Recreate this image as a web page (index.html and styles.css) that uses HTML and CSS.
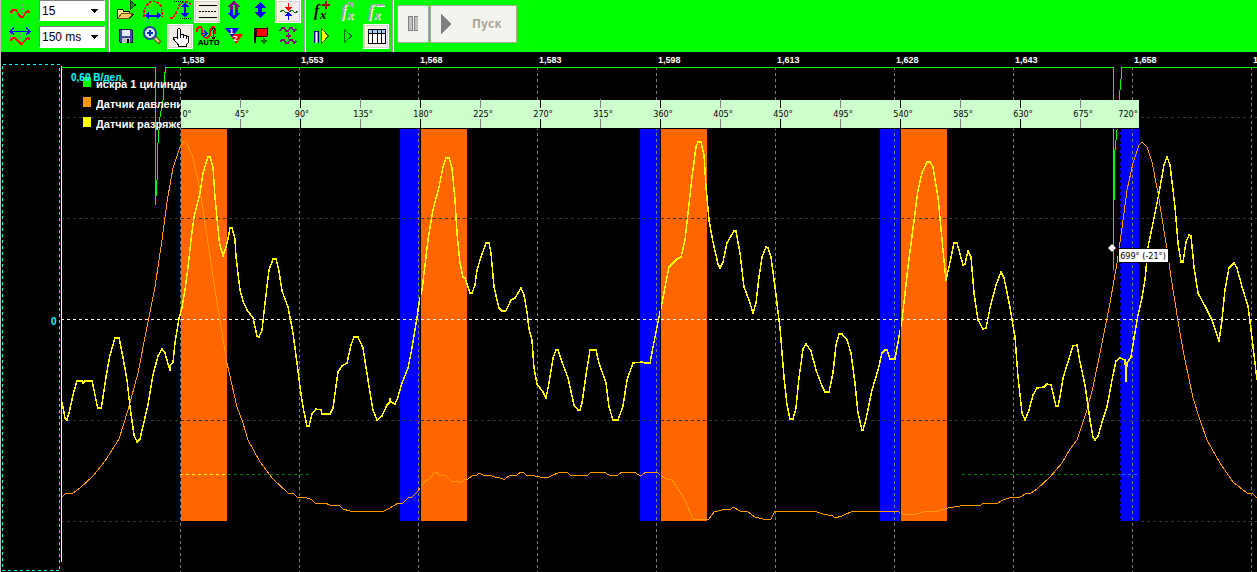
FILE: index.html
```html
<!DOCTYPE html>
<html lang="ru">
<head>
<meta charset="utf-8">
<title>Осциллограф</title>
<link rel="stylesheet" href="styles.css">
</head>
<body>
<header class="toolbar">
  <div class="scales">
    <label class="scale-icon" for="gain" aria-label="Усиление">
      <svg width="24" height="20" class="crisp"><path d="M4.500 3v15M9.500 3v15M14.500 3v15M19.500 3v15" stroke="#808080" stroke-dasharray="2 2"/><path d="M2 12L5 9H8L11 14 13 16H15L18 11 20 10 22 12" class="red thick"/></svg>
    </label>
    <div class="combo">
      <select id="gain"><option>15</option></select>
      <svg class="arrow crisp" width="8" height="5"><path d="M0 0h8L4 4z"/></svg>
    </div>
    <label class="scale-icon" for="sweep" aria-label="Развертка">
      <svg width="24" height="20" class="crisp"><path d="M2.500 6v8M12.500 6v12M21.500 6v8" stroke="#808080" stroke-dasharray="2 2"/><path d="M3 4.500h18M6 1L2 4.500l4 3M18 1l4 3.500-4 3" class="blue thick"/><path d="M2 14L5 11H7L11 15 13 17H14L18 12 20 11 22 13" class="red thick"/></svg>
    </label>
    <div class="combo">
      <select id="sweep"><option>150 ms</option></select>
      <svg class="arrow crisp" width="8" height="5"><path d="M0 0h8L4 4z"/></svg>
    </div>
  </div>
  <div class="divider"></div>
  <div class="tools tools-main">
    <button class="tool" aria-label="Открыть"><svg width="26" height="23" class="crisp"><path d="M4.500 18V9h5l1 2h6v3h4l-4 4.500H4.500z" fill="#ffe98a" stroke="#000"/><path d="M5 18l4-5h11l-4 5.500z" fill="#ffc864" stroke="#6b4a00"/><path d="M17.500 10V1l5 4-5 4" fill="#00a000" stroke="#003000"/></svg></button>
    <button class="tool" aria-label="Цикл"><svg width="26" height="23" class="crisp"><path d="M4 17V11l2-5 4-4 3-1 4 1 4 4 1 5v6" class="red thick" stroke-dasharray="3 1"/><path d="M6 15.500h14" stroke="#00f"/><path d="M5 15.500l4-4v8zM21 15.500l-4-4v8z" fill="#00f"/><path d="M8 14.500h10v2H8z" fill="#00f"/></svg></button>
    <button class="tool" aria-label="Амплитуда"><svg width="26" height="23" class="crisp"><path d="M3 18h3l3-5 4-9 3-2h5l3 2" class="red thick" stroke-dasharray="3 1"/><path d="M7 1.500h10M13 18.500h11" stroke="#000" stroke-dasharray="1 1"/><path d="M17 5h2v11h-2z" fill="#00f"/><path d="M18 2l-4 5h8zM18 18l-4-5h8z" fill="#00f"/></svg></button>
    <button class="tool pressed" aria-label="Сетка"><svg width="26" height="23" class="crisp"><path d="M5 5.500h18M5 17.500h18" stroke="#000"/><path d="M5 11.500h18" stroke="#000" stroke-dasharray="2 1"/></svg></button>
    <button class="tool" aria-label="Растянуть"><svg width="26" height="23" class="crisp"><path d="M13 1l7 6h-3v4H9V7H6z" fill="#800080"/><path d="M13 19l7-6h-3v-3H9v3H6z" fill="#00f"/><path d="M12 5h2v10h-2z" fill="#0f0"/></svg></button>
    <button class="tool" aria-label="Сжать"><svg width="26" height="23" class="crisp"><path d="M12 2l6 6h-4v4h4l-6 6-6-6h4V8H6z" fill="#00f"/></svg></button>
    <button class="tool pressed" aria-label="Уровень"><svg width="26" height="23" class="crisp"><path d="M5 12l3-2 3 3 3-1 3-2 3 3 3-2" fill="none" stroke="#006000"/><path d="M13 3h1v4h3l-3 4h-1l-3-4h3z" fill="#f00"/><path d="M13 20h1v-4h3l-3-4h-1l-3 4h3z" fill="#00f"/></svg></button>
    <button class="tool" aria-label="Сохранить"><svg width="26" height="25" class="crisp"><path d="M6.500 5.500h12l1 1v12h-12l-1-1z" fill="#3c4c9c" stroke="#101840"/><path d="M9 6h8v6H9z" fill="#e8e8ff"/><path d="M9 14h8v5H9z" fill="#c0c0c0"/><path d="M14 15h2v4h-2z"/></svg></button>
    <button class="tool" aria-label="Лупа"><svg width="26" height="25"><path d="M14 13l6 6" stroke="#705000" stroke-width="4"/><path d="M15 14l4 4" stroke="#ffd8a0" stroke-width="2"/><circle cx="10" cy="9" r="6" fill="#d8eeff" stroke="#204090" stroke-width="2"/><path d="M7 9h6M10 6v6" stroke="#0030b0" stroke-width="2"/></svg></button>
    <button class="tool pressed" aria-label="Рука"><svg width="26" height="25" class="crisp"><path d="M10.500 14V5.500l1-1h1l1 1V10h2l1 1h2l1 1h1l1 1v5l-2 3v1h-8v-1l-5-6v-2h2z" fill="#fff" stroke="#000"/><path d="M13.500 10v4M16.500 11v3M19.500 12v3" stroke="#000"/></svg></button>
    <button class="tool" aria-label="Авто"><svg width="26" height="25" class="crisp"><path class="red thick" d="M3 8V5l2-2h2l1 2v5l2 3 3 1 3-3V6l2-3h2l1 2v5"/><path d="M7 9.500h5M10 7l3 2.500-3 2.500" class="blue thick"/><path d="M19.500 6v8M17 7l2.500-3L22 7M17 12l2.500 3 2.500-3" fill="none" stroke="#000"/><text class="auto-text" x="4" y="21">AUTO</text></svg></button>
    <button class="tool" aria-label="Каналы"><svg width="26" height="25"><path d="M9 10h13l-7 10z" fill="#f00"/><path d="M4 4h14l-7 9z" fill="#00f"/><text class="mini-text" x="8" y="10">1</text><text class="mini-text" x="12" y="17">2</text></svg></button>
    <button class="tool" aria-label="Метка"><svg width="26" height="25" class="crisp"><path d="M7 4v15" stroke="#000" stroke-width="2"/><path d="M8 5l4-1 4 1 3-1v8l-3 1-4-1-4 1z" fill="#f00" stroke="#400000"/><path d="M16 14v6M13 17h6" stroke="#007000" stroke-width="2"/></svg></button>
    <button class="tool" aria-label="Сложить"><svg width="26" height="25" class="crisp"><path d="M5 7l2-3h2l2 3h2l2-3h2l2 3 2-2M5 18l2-2h2l2 3h2l2-3h2l2 3 2-2M13.500 9v6M11 12h5" class="thick" fill="none" stroke="#800080"/></svg></button>
  </div>
  <div class="divider"></div>
  <div class="tools tools-extra">
    <button class="tool" aria-label="Добавить функцию"><svg width="26" height="23"><text class="fx" x="5" y="16">f</text><text class="fx fx-small" x="11" y="19">x</text><path d="M17 1v8M13 5h8" stroke="#900000" stroke-width="2" class="crisp"/></svg></button>
    <button class="tool" aria-label="Изменить функцию"><svg width="26" height="23"><g class="off-light"><text class="fx" x="6" y="17">f</text><text class="fx fx-small" x="12" y="20">x</text></g><g class="off"><text class="fx" x="5" y="16">f</text><text class="fx fx-small" x="11" y="19">x</text><path d="M11 2h7v7z"/></g></svg></button>
    <button class="tool" aria-label="Удалить функцию"><svg width="26" height="23"><g class="off-light"><text class="fx" x="6" y="17">f</text><text class="fx fx-small" x="12" y="20">x</text><path d="M14 5h8v2h-8z"/></g><g class="off"><text class="fx" x="5" y="16">f</text><text class="fx fx-small" x="11" y="19">x</text><path d="M13 4h8v2h-8z"/></g></svg></button>
    <button class="tool" aria-label="Шаг"><svg width="26" height="25" class="crisp"><path d="M5.500 19V7h4v12" fill="none" stroke="#000080"/><path d="M7.500 8v11" stroke="#fff"/><path d="M12.500 4.500v15l7-7.500z" fill="#ff0" stroke="#406000"/></svg></button>
    <button class="tool" aria-label="Воспроизвести"><svg width="26" height="25" class="crisp"><path d="M8.500 5.500v13l7-6.500z" fill="none" stroke="#007000"/></svg></button>
    <button class="tool pressed" aria-label="Таблица"><svg width="26" height="25" class="crisp"><path d="M5.500 5.500h17v14h-17z" fill="#fff" stroke="#000"/><path d="M6 6h16v3H6z" fill="#a0d0ff"/><path d="M5 9.500h18M9.500 6v14M14.500 6v14M18.500 6v14" stroke="#000"/></svg></button>
  </div>
  <div class="divider"></div>
  <div class="run">
    <button class="run-button pause" aria-label="Пауза" disabled><svg width="12" height="16" class="crisp"><path d="M.5.5h4v14h-4zM6.500.5h4v14h-4z" fill="#c0c0c0" stroke="#808080"/></svg></button>
    <button class="run-button start" disabled><svg width="11" height="20" class="crisp"><path d="M0 0l11 10L0 20z" fill="#808080"/></svg><span>Пуск</span></button>
  </div>
</header>

<main class="scope">
  <svg class="plot" width="100%" height="520" role="img" aria-label="Осциллограмма">
    <g transform="translate(0 -52)">
      <g class="crisp">
        <path class="edge" d="M.5 52v520"/>
        <path class="panel" d="M2.500 64.500h57V570.500h-57z"/>
        <g class="phase-out">
          <path d="M400 129h20v392h-20zM640 129h20v392h-20zM880 129h20v392h-20zM1120 129h19v392h-19z"/>
        </g>
        <g class="phase-in">
          <path d="M181 129h46v392h-46zM421 129h46v392h-46zM661 129h46v392h-46zM901 129h46v392h-46z"/>
        </g>
        <path class="window" d="M1120.500 129v392"/>
        <path class="grid-x" d="M180.500 67v505M299.500 67v505M418.500 67v505M537.500 67v505M656.500 67v505M775.500 67v505M894.500 67v505M1013.500 67v505M1132.500 67v505M1251.500 67v505"/>
        <line class="grid-y" x1="61" x2="100%" y1="117.500" y2="117.500"/>
        <line class="grid-y" x1="61" x2="100%" y1="218.500" y2="218.500"/>
        <line class="grid-y" x1="61" x2="100%" y1="420.500" y2="420.500"/>
        <line class="grid-y" x1="61" x2="180" y1="521.500" y2="521.500"/>
        <line class="grid-y" x1="1141" x2="100%" y1="521.500" y2="521.500"/>
        <line class="zero" x1="61" x2="100%" y1="319.500" y2="319.500"/>
        <path class="level" d="M228 474.500h81M962 474.500h158"/>
        <path class="level level-in" d="M180 474.500h46"/>
        <path class="level level-out" d="M1122 474.500h17"/>

        <polyline class="trace pressure" points="62,497 66,493 73,493 80,488 93,476 105,461 119,439 128,410 138,373 148,322 155,287 162,240 167,202 173,168 180,147 184,141 187,144 192,155 197,175 202,203 208,243 215,290 227,363 237,407 243,423 248,440 260,462 273,479 288,493 293,493 297,497 305,497 312,500 315,503 325,503 330,505 339,505 343,509 350,511 384,511 390,508 398,503 403,503 408,498 412,497 418,491 423,483 429,479 435,472 437,472 439,475 446,476 451,481 458,481 461,483 464,480 468,479 472,476 477,475 479,473 483,475 492,476 495,477 500,478 503,479 505,479 509,476 517,475 521,472 523,472 526,475 535,476 540,477 549,477 560,472 567,472 570,475 580,476 588,475 591,472 604,472 609,475 618,475 622,472 634,472 639,475 642,475 646,472 657,472 660,475 667,479 672,480 682,495 688,507 693,519 709,519 714,512 722,510 731,509 733,507 740,511 748,512 755,517 763,519 771,519 775,511 814,511 823,514 833,516 835,518 842,516 853,511 897,511 903,514 913,515 923,512 938,511 948,508 960,506 963,505 981,505 983,503 998,503 1003,500 1012,497 1020,497 1027,493 1031,493 1037,489 1050,477 1062,463 1070,449 1077,440 1087,410 1093,387 1100,353 1110,303 1117,263 1122,228 1127,190 1133,163 1139,145 1142,142 1147,147 1152,162 1158,193 1166,243 1173,290 1181,339 1185,360 1193,398 1200,420 1207,440 1220,463 1233,482 1247,493 1252,493 1257,498"/>
        <polyline class="trace vacuum" points="62,402 65,418 67,420 69,413 73,395 77,381 82,381 83,383 85,381 92,381 94,390 97,405 98,408 101,408 102,404 106,377 110,355 115,338 119,338 122,352 127,380 130,407 134,435 137,442 140,439 143,426 148,405 153,375 158,356 162,349 165,353 168,364 170,370 170,366 173,362 175,343 179,318 182,308 185,290 188,267 191,240 194,217 200,193 203,173 208,157 210,157 213,167 215,197 219,239 220,245 223,256 226,247 228,239 230,228 232,228 235,239 236,257 240,290 243,301 247,310 253,318 257,336 259,337 262,330 265,303 269,270 273,259 276,259 279,271 282,291 288,307 293,333 297,363 300,387 303,407 307,426 309,426 312,414 316,409 321,410 322,414 330,414 333,408 338,372 342,366 347,363 351,345 354,337 358,337 363,348 368,380 373,410 377,420 382,416 387,405 389,403 390,399 391,402 395,404 398,397 402,383 408,368 412,348 417,318 419,303 422,290 428,240 433,210 439,187 443,167 446,158 449,158 452,168 455,200 457,233 460,263 463,277 465,278 468,287 470,293 472,293 475,285 477,270 481,257 486,243 489,243 491,253 494,287 499,308 502,311 506,311 511,300 515,298 521,288 524,295 527,312 529,329 532,340 534,368 537,384 543,392 546,398 549,383 553,358 556,350 558,350 562,362 568,378 574,405 578,410 580,410 582,403 586,375 590,350 596,350 599,363 606,383 609,407 613,420 618,420 623,406 627,380 633,363 642,362 645,363 650,363 653,347 658,322 662,303 665,287 669,267 677,259 681,257 685,240 688,213 692,177 696,147 698,142 701,142 704,155 706,187 709,220 713,242 718,264 720,268 723,262 727,243 734,231 736,231 740,253 744,287 749,300 753,313 756,303 759,277 762,257 766,247 768,248 771,257 775,287 780,328 781,340 784,377 787,405 790,419 793,419 796,408 799,378 803,349 806,344 811,351 816,370 822,386 825,392 829,392 833,373 836,345 839,334 842,334 847,340 851,353 855,383 858,413 862,430 863,430 866,419 872,390 878,370 882,353 885,350 887,350 890,359 895,359 899,337 902,320 908,267 915,213 918,190 922,173 927,162 930,162 933,167 938,197 943,250 946,280 949,267 954,243 957,243 963,265 965,264 968,251 971,257 974,293 978,320 983,329 986,328 990,308 996,285 1001,272 1004,278 1009,302 1015,337 1018,377 1022,413 1025,420 1029,410 1033,395 1037,388 1044,387 1047,384 1051,385 1053,393 1056,406 1058,406 1060,397 1063,378 1068,362 1073,346 1077,345 1080,362 1085,385 1090,420 1093,437 1095,440 1098,436 1103,419 1107,407 1112,380 1116,361 1120,358 1125,360 1126,381 1127,363 1131,357 1134,338 1138,315 1142,298 1145,280 1148,247 1153,223 1159,193 1164,165 1167,157 1170,165 1175,207 1178,243 1181,262 1183,262 1186,242 1189,235 1191,236 1194,267 1198,293 1205,306 1212,320 1219,341 1222,320 1225,290 1229,268 1234,263 1237,268 1242,287 1248,306 1252,338 1257,380"/>
        <path class="axis" d="M61.500 66v496"/>
        <path class="trace spark" d="M61 67.500H155.500V205L157 180V157L158 143 160 117 163 100 164 83 165.500 67.500H1113.500V270L1114 200 1115 150 1117 130 1120 90 1122 67.500H1257"/>
      </g>

      <g class="time">
        <text x="182" y="63">1,538</text><text x="301" y="63">1,553</text><text x="420" y="63">1,568</text><text x="539" y="63">1,583</text><text x="658" y="63">1,598</text><text x="777" y="63">1,613</text><text x="896" y="63">1,628</text><text x="1015" y="63">1,643</text><text x="1134" y="63">1,658</text><text x="1253" y="63">1,673</text>
      </g>

      <g class="legend">
        <path class="crisp" fill="#0f0" d="M83 77h8v10h-8z"/><text x="96" y="88">искра 1 цилиндр</text>
        <path class="crisp" fill="#f90" d="M83 97h8v10h-8z"/>
        <path class="crisp" fill="#ff0" d="M83 117h8v10h-8z"/>
        <svg x="96" y="94" width="84" height="40"><text x="0" y="14">Датчик давления</text><text x="0" y="34">Датчик разряжения</text></svg>
      </g>
      <text class="unit" x="71" y="81">0,60 В/дел.</text>
      <text class="unit" x="51" y="325">0</text>

      <g class="crisp">
        <path class="ruler" d="M181 100h958v28H181z"/>
        <path stroke="#000" d="M181 128.500h958M420.500 128v393M660.500 128v393M900.500 128v393"/>
        <path class="tick-major" d="M300.500 99v9m0 11v9M420.500 99v9m0 11v9M540.500 99v9m0 11v9M660.500 99v9m0 11v9M780.500 99v9m0 11v9M900.500 99v9m0 11v9M1020.500 99v9m0 11v9"/>
        <path class="tick-minor" d="M240.500 99v9m0 11v9M360.500 99v9m0 11v9M480.500 99v9m0 11v9M600.500 99v9m0 11v9M720.500 99v9m0 11v9M840.500 99v9m0 11v9M960.500 99v9m0 11v9M1080.500 99v9m0 11v9"/>
      </g>
      <g class="degrees">
        <text x="187" y="117">0°</text><text x="242" y="117">45°</text><text x="302" y="117">90°</text><text x="363" y="117">135°</text><text x="423" y="117">180°</text><text x="483" y="117">225°</text><text x="543" y="117">270°</text><text x="603" y="117">315°</text><text x="663" y="117">360°</text><text x="723" y="117">405°</text><text x="783" y="117">450°</text><text x="843" y="117">495°</text><text x="903" y="117">540°</text><text x="963" y="117">585°</text><text x="1023" y="117">630°</text><text x="1083" y="117">675°</text><text x="1128" y="117">720°</text>
      </g>

      <g class="cursor">
        <path fill="#fff" d="M1112 244l4 4-4 4-4-4z"/>
        <path class="crisp" fill="#fff" stroke="#000" d="M1118.500 248.500h50v14h-50z"/>
        <text x="1143" y="259">699° (-21°)</text>
      </g>
    </g>
  </svg>
</main>
</body>
</html>
```

FILE: styles.css
```css
* { box-sizing: border-box; }

body {
  margin: 0;
  min-height: 100vh;
  display: flex;
  flex-direction: column;
  background: #000;
  overflow: hidden;
  font-family: "Liberation Sans", Arial, sans-serif;
}

button, select { font: inherit; margin: 0; }
svg { display: block; }
.crisp { shape-rendering: crispEdges; }

/* Toolbar */
.toolbar {
  display: flex;
  gap: 3px;
  padding-bottom: 3px;
  background: #0f0;
  border-left: 1px solid #c0c0c0;
}

.scales {
  display: grid;
  grid-template-columns: 24px 66px;
  grid-template-rows: 21px 22px;
  gap: 5px 7px;
  padding-left: 7px;
}

.scale-icon { display: flex; align-items: center; }

.combo {
  position: relative;
  border: 1px solid #808080;
  border-right-color: #fff;
  border-bottom-color: #fff;
  background: #fff;
}

.combo select {
  appearance: none;
  width: 100%;
  height: 100%;
  padding: 0 16px 0 2px;
  border: 0;
  background: transparent;
  color: #000;
  font-size: 12px;
}

.combo .arrow {
  position: absolute;
  right: 6px;
  top: 8px;
  pointer-events: none;
}

.divider {
  width: 2px;
  margin-bottom: -3px;
  background: #fff;
  border-left: 1px solid #a0a0a0;
}

.tools {
  display: grid;
  grid-template-rows: 23px 25px;
  gap: 1px;
}

.tools-main { grid-template-columns: repeat(7, 26px); }
.tools-extra { grid-template-columns: repeat(3, 26px); }

.tool {
  padding: 0;
  border: 0;
  background: transparent;
}

.tool.pressed {
  background: #f2efe6;
  box-shadow: inset 0 0 0 1px #fff, inset 0 0 0 2px #d8d4c4;
  outline: 1px solid #fff;
  outline-offset: -1px;
}

.red { fill: none; stroke: #f00; }
.blue { fill: none; stroke: #00f; }
.thick { stroke-width: 1.5; }
.off, .off .fx { fill: #a8a8a8; }
.off-light, .off-light .fx { fill: #fff; }

.fx {
  font: italic bold 16px "Liberation Serif", serif;
}

.fx-small { font-size: 13px; }
.auto-text { font: bold 7px "DejaVu Sans", sans-serif; }
.mini-text { font: bold 7px "DejaVu Sans", sans-serif; fill: #fff; }

.run {
  display: flex;
  gap: 1px;
  padding-top: 5px;
}

.run-button {
  display: flex;
  align-items: center;
  height: 38px;
  border: 1px solid #aca899;
  border-radius: 1px;
  background: #f4f4ee;
  color: #aca899;
  font: bold 12px "DejaVu Sans Condensed", "DejaVu Sans", sans-serif;
  text-shadow: 1px 1px #fff;
}

.pause { width: 32px; padding: 0 10px; }
.start { width: 87px; padding: 0 10px; gap: 20px; }

/* Oscillogram */
.scope { flex: 1; min-width: 0; }
.plot { overflow: hidden; }

.edge { stroke: #c0c0c0; }
.panel { fill: none; stroke: #0ff; stroke-dasharray: 3 3; }
.axis { stroke: #fff; }
.grid-x { stroke: #808080; stroke-dasharray: 3 3; }
.grid-y { stroke: #333; stroke-dasharray: 3 3; }
.zero { stroke: #fff; stroke-dasharray: 3 3; }

.phase-in { fill: #f60; }
.phase-out { fill: #00f; }
.window { stroke: #000; stroke-dasharray: 3 3; }

.level { stroke: #008000; stroke-dasharray: 3 3; }
.level-in { stroke: #ff0; }
.level-out { stroke: #0080ff; }

.trace { fill: none; }
.pressure { stroke: #f90; }
.vacuum { stroke: #ff0; stroke-width: 1.5; stroke-linejoin: round; }
.spark { stroke: #0f0; }

.time { fill: #fff; font-size: 9px; font-weight: bold; }
.legend { fill: #fff; font-size: 11px; font-weight: bold; }
.unit { fill: #0ff; font-size: 10px; font-weight: bold; }

.ruler { fill: #cfc; }
.tick-major { stroke: #000; }
.tick-minor { stroke: #808080; }

.degrees, .cursor {
  font-family: "DejaVu Sans Condensed", "DejaVu Sans", sans-serif;
  font-size: 9px;
  text-anchor: middle;
}
```
